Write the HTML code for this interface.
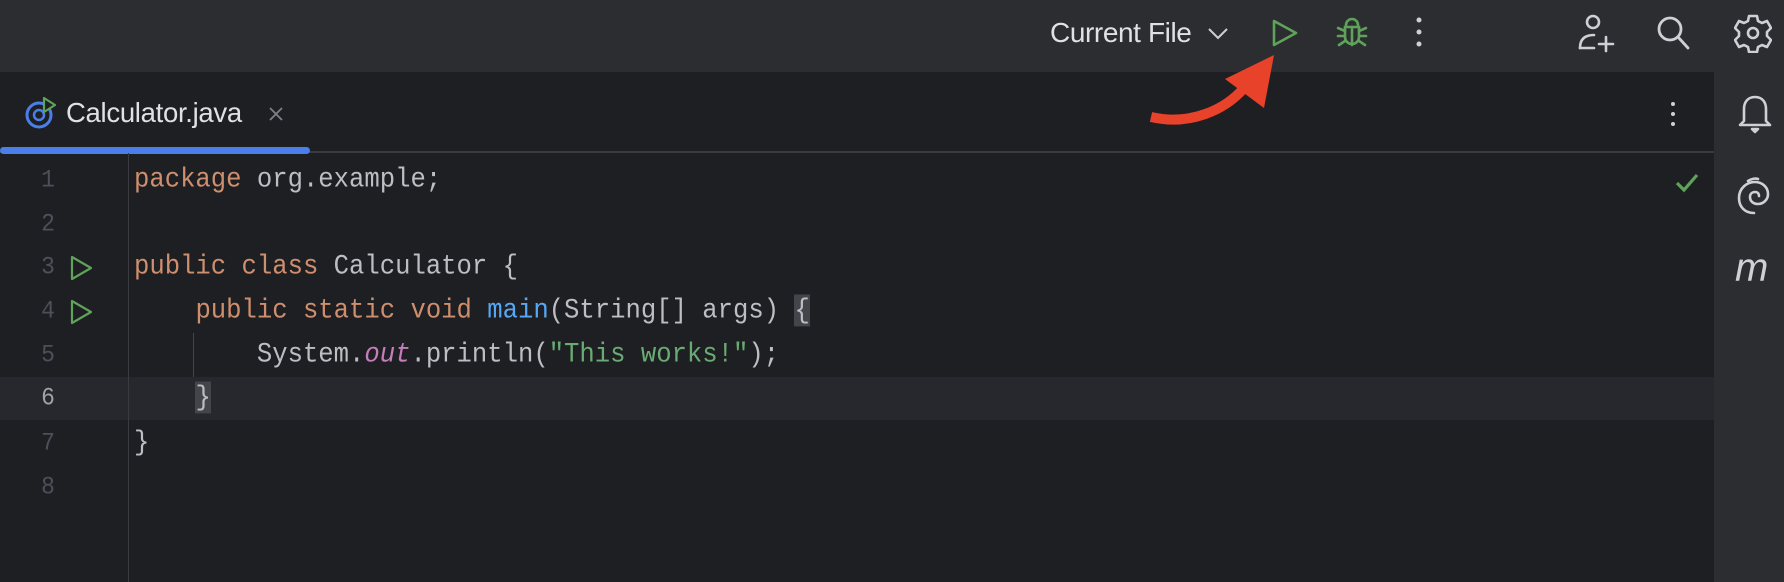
<!DOCTYPE html>
<html><head><meta charset="utf-8"><style>
*{margin:0;padding:0;box-sizing:border-box}
body{width:1784px;height:582px;background:#1e1f22;position:relative;overflow:hidden;font-family:"Liberation Sans",sans-serif}
.top{position:absolute;left:0;top:0;width:1784px;height:72px;background:#2b2d30}
.side{position:absolute;left:1714px;top:72px;width:70px;height:510px;background:#2b2d30}
.tabsep{position:absolute;left:0;top:151px;width:1714px;height:2px;background:#393b40}
.blue{position:absolute;left:0;top:147px;width:310px;height:7px;background:#4a7ee8;border-radius:4px}
.gut{position:absolute;left:128px;top:153px;width:1px;height:429px;background:#393b40}
.cur{position:absolute;left:0;top:377px;width:1714px;height:43px;background:#26282e}
.ln{position:absolute;left:30px;width:36px;text-align:center;font-family:"Liberation Mono",monospace;font-size:23px;color:#4b5059;transform:scaleY(1.1)}
.code{position:absolute;left:134px;font-family:"Liberation Mono",monospace;font-size:25.6px;color:#bcbec4;white-space:pre;line-height:30px;transform:scaleY(1.1);transform-origin:left center}
.k{color:#cf8e6d}.m{color:#56a8f5}.f{color:#c77dbb;font-style:italic}.s{color:#6aab73}
.hl{background:#43454a}
.t{position:absolute;color:#dfe1e5}
svg{position:absolute}
</style></head><body>
<div class="top"></div>
<div class="side"></div>
<div class="cur"></div>
<div class="tabsep"></div>
<div class="blue"></div>
<div class="gut"></div>
<div style="position:absolute;left:193px;top:333px;width:1px;height:44px;background:#43454a"></div>

<!-- tab -->
<svg style="left:24px;top:96px" width="34" height="34" viewBox="0 0 34 34"><circle cx="15" cy="19" r="12" fill="none" stroke="#4a7ee8" stroke-width="3"/><circle cx="15" cy="19" r="5" fill="none" stroke="#4a7ee8" stroke-width="2.5"/><path d="M20 2 L31 9 L20 16 Z" fill="#1e1f22" stroke="#5fa25a" stroke-width="2.2" stroke-linejoin="round"/></svg>
<div class="t" style="left:66px;top:97px;font-size:27.5px;letter-spacing:-0.3px">Calculator.java</div>
<svg style="left:268px;top:106px" width="16" height="16"><path d="M2 2L14 14M14 2L2 14" stroke="#7e8087" stroke-width="1.8"/></svg>
<svg style="left:1668px;top:100px" width="10" height="28"><circle cx="5" cy="4" r="2" fill="#ced0d6"/><circle cx="5" cy="14" r="2" fill="#ced0d6"/><circle cx="5" cy="24" r="2" fill="#ced0d6"/></svg>

<!-- top bar -->
<div class="t" style="left:1050px;top:17px;font-size:28px;letter-spacing:-0.4px">Current File</div>
<svg style="left:1207px;top:26px" width="22" height="14"><path d="M2 3L11 12L20 3" stroke="#ced0d6" stroke-width="2" fill="none"/></svg>
<svg style="left:1270px;top:18px" width="30" height="30"><path d="M4 3L26 15L4 27Z" fill="none" stroke="#5fa25a" stroke-width="2.6" stroke-linejoin="round"/></svg>
<svg style="left:1335px;top:15px" width="34" height="34" viewBox="0 0 34 34" fill="none" stroke="#5fa25a" stroke-width="2.6" stroke-linecap="round"><path d="M11 10a6 6 0 0 1 12 0"/><path d="M17 12v18"/><path d="M10 12h14v10a7 7 0 0 1-14 0z"/><path d="M3 13l7 3M31 13l-7 3M3 21h7M31 21h-7M4 30l6-4M30 30l-6-4"/></svg>
<svg style="left:1414px;top:16px" width="10" height="32"><circle cx="5" cy="4" r="2.5" fill="#ced0d6"/><circle cx="5" cy="16" r="2.5" fill="#ced0d6"/><circle cx="5" cy="28" r="2.5" fill="#ced0d6"/></svg>
<svg style="left:1577px;top:13px" width="38" height="40" fill="none" stroke="#ced0d6" stroke-width="2.6" stroke-linecap="round"><circle cx="16" cy="9" r="6"/><path d="M3 35c0-9 5-13 14-13"/><path d="M3 35h14M29 24v14M22 31h14"/></svg>
<svg style="left:1655px;top:14px" width="38" height="38" fill="none" stroke="#ced0d6" stroke-width="2.8" stroke-linecap="round"><circle cx="15" cy="15" r="11"/><path d="M23 23L33 34"/></svg>
<svg style="left:1734px;top:13px" width="38" height="40" viewBox="0 0 38 40" fill="none" stroke="#ced0d6" stroke-width="2.6" stroke-linejoin="round"><path d="M15 3h8l1 5 4 2 5-2 4 7-4 4v4l4 4-4 7-5-2-4 2-1 5h-8l-1-5-4-2-5 2-4-7 4-4v-4l-4-4 4-7 5 2 4-2z"/><circle cx="19" cy="20" r="5"/></svg>

<!-- sidebar -->
<svg style="left:1736px;top:94px" width="38" height="42" fill="none" stroke="#ced0d6" stroke-width="2.6" stroke-linejoin="round"><path d="M19 3c-8 0-11 6-11 12v12l-4 4h30l-4-4V15c0-6-3-12-11-12z"/><path d="M16 35h6l-3 3z" fill="#ced0d6"/></svg>
<svg style="left:1736px;top:176px" width="38" height="40" fill="none" stroke="#ced0d6" stroke-width="2.6" stroke-linecap="round"><path d="M18 37C8 37 3 30 3 22 3 12 11 6 19 6c7 0 13 5 13 12 0 6-5 10-10 10-5 0-8-3-8-7 0-3 2-5 5-5 3 0 4 2 4 4"/><path d="M12 5c3-2 7-3 10-2"/></svg>
<div style="position:absolute;left:1735px;top:246px;font-family:'Liberation Sans',sans-serif;font-style:italic;font-size:40px;color:#ced0d6">m</div>

<!-- check -->
<svg style="left:1674px;top:172px" width="26" height="22"><path d="M3 11L10 18L23 3" stroke="#5fa25a" stroke-width="3.2" fill="none"/></svg>

<!-- line numbers -->
<div class="ln" style="top:167px">1</div>
<div class="ln" style="top:211px">2</div>
<div class="ln" style="top:254px">3</div>
<div class="ln" style="top:298px">4</div>
<div class="ln" style="top:342px">5</div>
<div class="ln" style="top:385px;color:#a1a3ab">6</div>
<div class="ln" style="top:430px">7</div>
<div class="ln" style="top:474px">8</div>
<svg style="left:69px;top:254px" width="26" height="28"><path d="M3 3L22 14L3 25Z" fill="none" stroke="#5fa25a" stroke-width="2.2" stroke-linejoin="round"/></svg>
<svg style="left:69px;top:298px" width="26" height="28"><path d="M3 3L22 14L3 25Z" fill="none" stroke="#5fa25a" stroke-width="2.2" stroke-linejoin="round"/></svg>

<!-- code -->
<div class="code" style="top:165px"><span class="k">package</span> org.example;</div>
<div class="code" style="top:252px"><span class="k">public class</span> Calculator {</div>
<div class="code" style="top:296px">    <span class="k">public static void</span> <span class="m">main</span>(String[] args) <span class="hl">{</span></div>
<div class="code" style="top:340px">        System.<span class="f">out</span>.println(<span class="s">"This works!"</span>);</div>
<div class="code" style="top:383px">    <span class="hl">}</span></div>
<div class="code" style="top:428px">}</div>

<!-- red arrow -->
<svg style="left:1140px;top:50px" width="140" height="80" viewBox="1140 50 140 80"><path d="M1151 117 C1190 126 1225 110 1244 88" fill="none" stroke="#e8432a" stroke-width="10" stroke-linecap="butt"/><path d="M1274 55 L1225 79 L1264 108 Z" fill="#e8432a"/></svg>
</body></html>
